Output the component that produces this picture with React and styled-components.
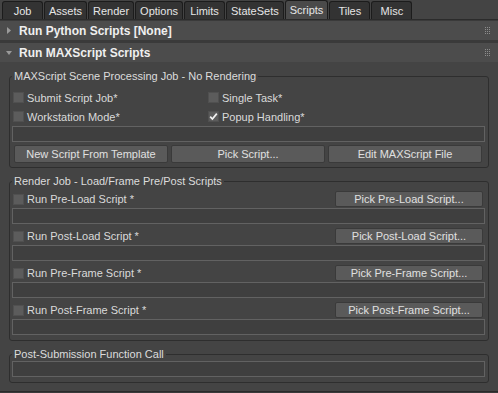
import React from "react";
import styled, { createGlobalStyle } from "styled-components";

const GlobalStyle = createGlobalStyle`
  body { margin: 0; background: #444; }
`;

const Panel = styled.div`
  width: 498px;
  height: 393px;
  overflow: hidden;
  background: #3a3a3a;
  font-family: "Liberation Sans", Arial, sans-serif;
  font-size: 11px;
  color: #dadada;
  display: flex;
  flex-direction: column;
`;

const TabBar = styled.div`
  display: flex;
  align-items: flex-end;
  gap: 1px;
  height: 19px;
  padding-left: 2px;
  background: #444;
  border-bottom: 1px solid #2b2b2b;
`;

const Tab = styled.div`
  box-sizing: border-box;
  min-width: 41px;
  height: ${(p) => (p.$active ? 19 : 18)}px;
  padding: 0 4px;
  display: flex;
  align-items: center;
  justify-content: center;
  background: ${(p) => (p.$active ? "#4a4a4a" : "#333")};
  border: 1px solid #1c1c1c;
  border-bottom: none;
  border-radius: 3px 3px 0 0;
  color: #e6e6e6;
`;

const RolloutHead = styled.div`
  height: 19px;
  flex: none;
  margin-top: ${(p) => p.$gap}px;
  display: flex;
  align-items: center;
  gap: 7px;
  padding: 0 8px 0 6px;
  background: #4c4c4c;
  font-weight: bold;
  font-size: 12px;
  color: #efefef;
`;

const Grip = styled.svg`
  margin-left: auto;
`;

const RolloutBody = styled.div`
  flex: 1;
  background: #444;
  padding: 0 9px;
  margin-bottom: 1px;
  border-bottom: 1px solid #2a2a2a;
`;

const Group = styled.fieldset`
  margin: ${(p) => p.$top}px 0 0;
  padding: ${(p) => p.$pad};
  border: 1px solid #2e2e2e;
  border-radius: 3px;
  min-width: 0;
`;

const Legend = styled.legend`
  padding: 0 2px;
  line-height: 13px;
  color: #dcdcdc;
`;

const CheckGrid = styled.div`
  display: grid;
  grid-template-columns: 195px 1fr;
  grid-auto-rows: 19px;
  padding-left: 1px;
`;

const CheckLabel = styled.label`
  display: flex;
  align-items: center;
  gap: 3px;
  color: #dadada;
  white-space: nowrap;
`;

const Box = styled.span`
  box-sizing: border-box;
  width: 11px;
  height: 11px;
  background: #5c5c5c;
  border: 1px solid #505050;
  display: flex;
  align-items: center;
  justify-content: center;
`;

const Field = styled.div`
  box-sizing: border-box;
  height: 16px;
  background: #3f3f3f;
  border: 1px solid #626262;
`;

const ButtonRow = styled.div`
  display: grid;
  grid-template-columns: repeat(3, 1fr);
  gap: 3px;
  margin-top: 3px;
  padding: 0 3px 0 2px;
`;

const Button = styled.div`
  box-sizing: border-box;
  height: ${(p) => p.$h || 18}px;
  width: ${(p) => (p.$w ? `${p.$w}px` : "auto")};
  display: flex;
  align-items: center;
  justify-content: center;
  background: #5a5a5a;
  border: 1px solid #3a3a3a;
  border-radius: 2px;
  color: #e0e0e0;
  white-space: nowrap;
`;

const ScriptBlock = styled.div`
  & + & { margin-top: 4px; }
`;

const ScriptRow = styled.div`
  display: flex;
  align-items: center;
  justify-content: space-between;
  height: 16px;
  padding: 0 2px 0 1px;
  margin-bottom: 1px;
`;

const Check = ({ checked, children }) => (
  <CheckLabel>
    <Box>
      {checked && (
        <svg width="9" height="9" viewBox="0 0 9 9">
          <path d="M1.2 4.6 L3.4 7 L7.8 1.6" fill="none" stroke="#f2f2f2" strokeWidth="1.7" />
        </svg>
      )}
    </Box>
    {children}
  </CheckLabel>
);

const Head = ({ open, gap, children }) => (
  <RolloutHead $gap={gap}>
    {open ? (
      <svg width="6" height="6" viewBox="0 0 6 6">
        <polygon points="0,1 6,1 3,5" fill="#9a9a9a" />
      </svg>
    ) : (
      <svg width="6" height="7" viewBox="0 0 6 7">
        <polygon points="1,0 5,3.5 1,7" fill="#9a9a9a" />
      </svg>
    )}
    {children}
    <Grip width="5" height="7" viewBox="0 0 5 7">
      {[0, 2, 4].map((x) =>
        [0, 2, 4, 6].map((y) => <rect key={`${x}-${y}`} x={x} y={y} width="1" height="1" fill="#8c8c8c" />)
      )}
    </Grip>
  </RolloutHead>
);

const tabs = ["Job", "Assets", "Render", "Options", "Limits", "StateSets", "Scripts", "Tiles", "Misc"];

const scripts = [
  ["Run Pre-Load Script *", "Pick Pre-Load Script..."],
  ["Run Post-Load Script *", "Pick Post-Load Script..."],
  ["Run Pre-Frame Script *", "Pick Pre-Frame Script..."],
  ["Run Post-Frame Script *", "Pick Post-Frame Script..."],
];

export default function App() {
  return (
    <>
      <GlobalStyle />
      <Panel>
        <TabBar>
          {tabs.map((t) => (
            <Tab key={t} $active={t === "Scripts"}>{t}</Tab>
          ))}
        </TabBar>
        <Head gap={1}>Run Python Scripts [None]</Head>
        <Head gap={3} open>Run MAXScript Scripts</Head>
        <RolloutBody>
          <Group $top={8} $pad="5px 3px 4px 2px">
            <Legend>MAXScript Scene Processing Job - No Rendering</Legend>
            <CheckGrid>
              <Check>Submit Script Job*</Check>
              <Check>Single Task*</Check>
              <Check>Workstation Mode*</Check>
              <Check checked>Popup Handling*</Check>
            </CheckGrid>
            <Field />
            <ButtonRow>
              <Button>New Script From Template</Button>
              <Button>Pick Script...</Button>
              <Button>Edit MAXScript File</Button>
            </ButtonRow>
          </Group>
          <Group $top={7} $pad="3px 3px 5px 2px">
            <Legend>Render Job - Load/Frame Pre/Post Scripts</Legend>
            {scripts.map(([label, btn]) => (
              <ScriptBlock key={label}>
                <ScriptRow>
                  <Check>{label}</Check>
                  <Button $h={16} $w={148}>{btn}</Button>
                </ScriptRow>
                <Field />
              </ScriptBlock>
            ))}
          </Group>
          <Group $top={7} $pad="0 3px 5px 2px">
            <Legend>Post-Submission Function Call</Legend>
            <Field />
          </Group>
        </RolloutBody>
      </Panel>
    </>
  );
}
